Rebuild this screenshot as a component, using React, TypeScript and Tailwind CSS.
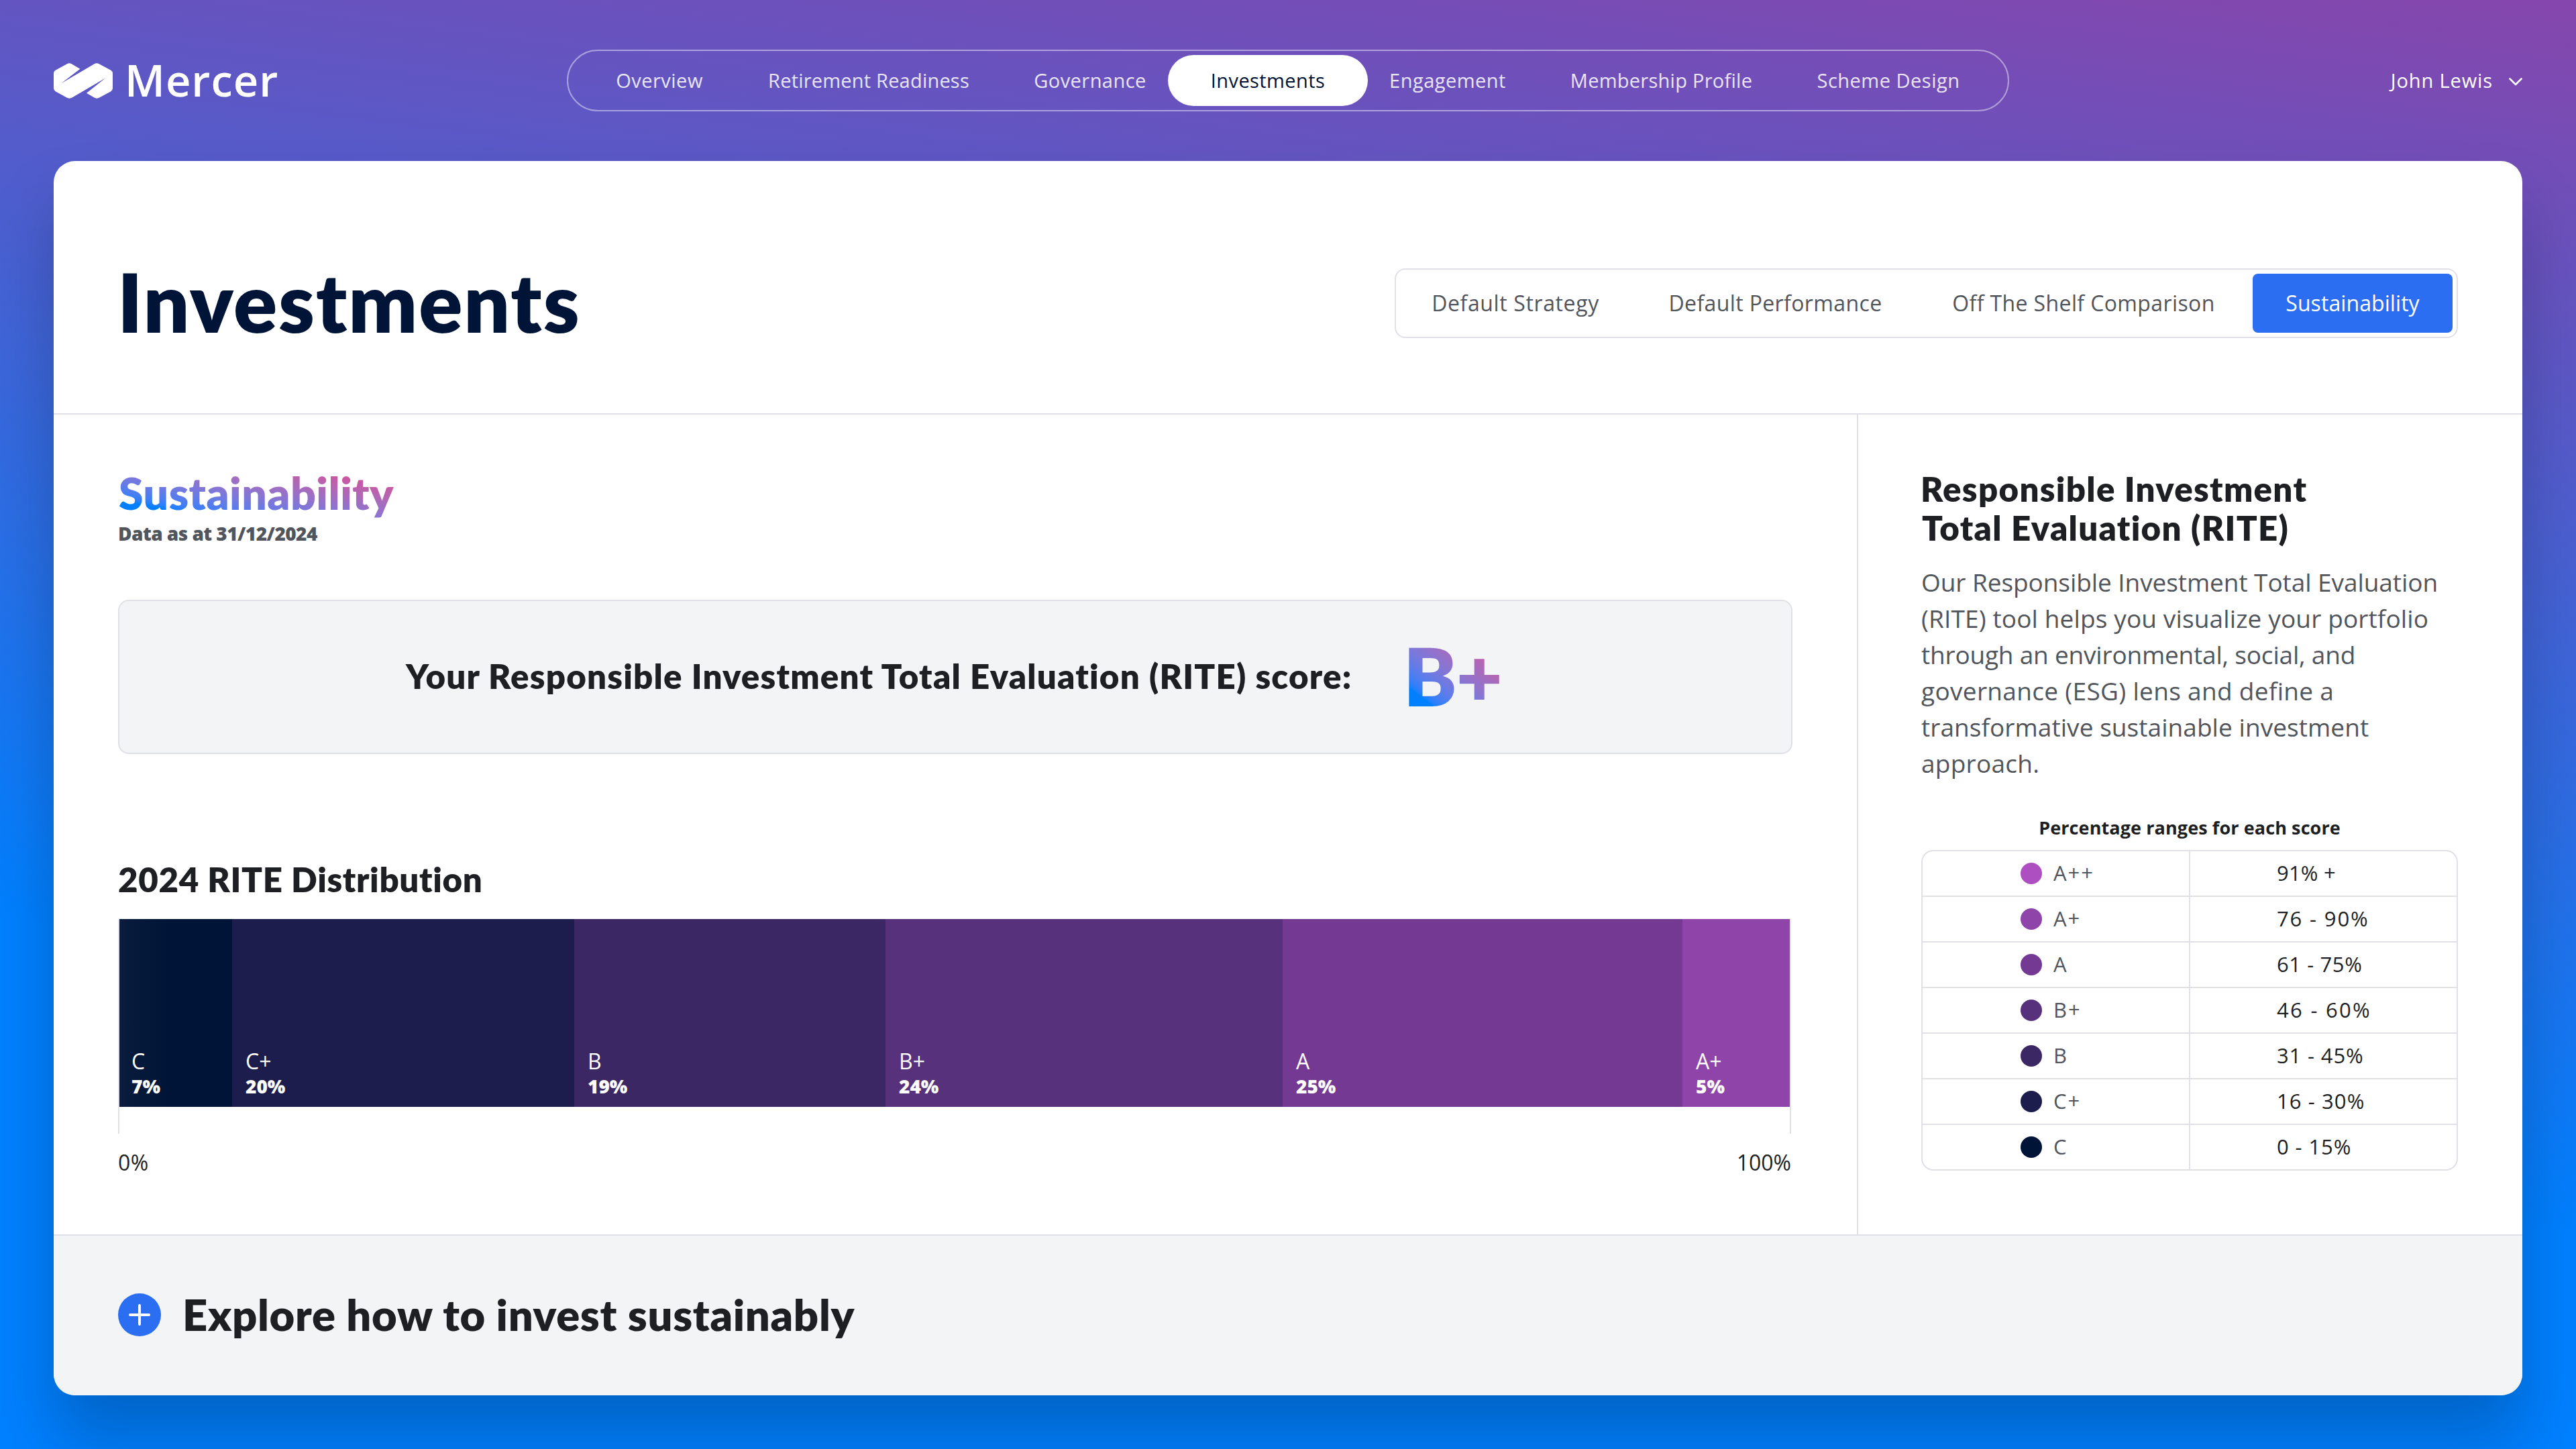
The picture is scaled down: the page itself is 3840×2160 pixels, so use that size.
import React from 'react';

const navItems = [
  { label: 'Overview', tracking: 'tracking-[0.5px]' },
  { label: 'Retirement Readiness', tracking: 'tracking-[0.2px]' },
  { label: 'Governance', tracking: 'tracking-[0.45px]' },
  { label: 'Investments', tracking: 'tracking-[0.4px]', active: true },
  { label: 'Engagement', tracking: 'tracking-[0.48px]' },
  { label: 'Membership Profile', tracking: 'tracking-[0.26px]' },
  { label: 'Scheme Design', tracking: 'tracking-[0.5px]' },
];

const tabs = [
  { label: 'Default Strategy', tracking: 'tracking-[0.62px]' },
  { label: 'Default Performance', tracking: 'tracking-[0.38px]' },
  { label: 'Off The Shelf Comparison', tracking: 'tracking-[0.38px]' },
  { label: 'Sustainability', tracking: 'tracking-[0.08px]', active: true },
];

const segments = [
  { grade: 'C', share: '7%', box: 'w-[168px] pl-[18px] bg-linear-to-r from-[#0b1c3d] to-[#001437] to-45%' },
  { grade: 'C+', share: '20%', box: 'w-[510px] pl-[20px] bg-[#1d1d4d]' },
  { grade: 'B', share: '19%', box: 'w-[464px] pl-[20px] bg-[#3a2764]' },
  { grade: 'B+', share: '24%', box: 'w-[592px] pl-[20px] bg-[#57317c]' },
  { grade: 'A', share: '25%', box: 'w-[596px] pl-[20px] bg-[#733993]' },
  { grade: 'A+', share: '5%', box: 'w-[160px] pl-[20px] bg-[#8f44aa]' },
];

const ranges = [
  { grade: 'A++', range: '91% +', dot: 'bg-[#ad4ec1]', tracking: 'tracking-[0.2px]' },
  { grade: 'A+', range: '76 - 90%', dot: 'bg-[#8f44aa]', tracking: 'tracking-[1.86px]' },
  { grade: 'A', range: '61 - 75%', dot: 'bg-[#733993]', tracking: 'tracking-[0.6px]' },
  { grade: 'B+', range: '46 - 60%', dot: 'bg-[#57317c]', tracking: 'tracking-[2.3px]' },
  { grade: 'B', range: '31 - 45%', dot: 'bg-[#3a2764]', tracking: 'tracking-[0.86px]' },
  { grade: 'C+', range: '16 - 30%', dot: 'bg-[#1d1d4d]', tracking: 'tracking-[1.1px]' },
  { grade: 'C', range: '0 - 15%', dot: 'bg-[#001437]', tracking: 'tracking-[0.9px]' },
];

function Logo() {
  return (
    <div className="flex items-center">
      <svg viewBox="60 101 264 158" className="h-[53px] w-[88px] fill-white">
        <path d="M60 147 Q60 137 68 133 L120 104 Q130 99 140 104 L178 127 L94 191 L242 104 Q253 99 263 104 L316 133 Q324 138 324 147 L324 213 Q324 222 316 227 L263 256 Q253 261 243 256 L207 235 L291 168 L141 256 Q130 261 120 256 L68 227 Q60 222 60 213 Z" />
      </svg>
      <span className="-mt-[3px] ml-[18px] text-[65px] leading-[72px] font-semibold tracking-[1px] text-white">Mercer</span>
    </div>
  );
}

function Header() {
  return (
    <header className="grid h-[240px] grid-cols-[765px_2150px_1fr] items-center px-[80px]">
      <Logo />
      <nav className="grid h-[92px] grid-cols-[228px_396px_264px_266px_270px_367px_310px] items-center rounded-full border-2 border-white/45 pl-[22px]">
        {navItems.map((item) =>
          item.active ? (
            <a key={item.label} className={`-mx-[16px] flex h-[76px] items-center justify-center rounded-full bg-white text-[29px] text-[#001437] ${item.tracking}`}>
              {item.label}
            </a>
          ) : (
            <a key={item.label} className={`text-center text-[29px] whitespace-nowrap text-white/85 ${item.tracking}`}>
              {item.label}
            </a>
          ),
        )}
      </nav>
      <div className="flex items-center justify-end gap-[24px] text-white">
        <span className="text-[29px] tracking-[0.88px]">John Lewis</span>
        <svg viewBox="0 0 20 12" className="mt-[4px] h-[12px] w-[20px] fill-none stroke-white stroke-[2.6]">
          <path d="M1.5 1.5 L10 10 L18.5 1.5" strokeLinecap="round" strokeLinejoin="round" />
        </svg>
      </div>
    </header>
  );
}

function TitleBar() {
  return (
    <div className="flex h-[378px] items-center justify-between border-b-2 border-[#e0e1e6] pt-[48px] pr-[96px] pl-[95px]">
      <h1 className="pb-[4px] font-['Lato','Open_Sans',sans-serif] text-[121px] leading-[140px] font-extrabold tracking-[1.9px] text-[#001437]">Investments</h1>
      <div className="grid h-[104px] grid-cols-[344px_415px_488px_298px] items-center gap-[8px] rounded-[16px] border-2 border-[#e0e1e6] px-[6px]">
        {tabs.map((tab) =>
          tab.active ? (
            <a key={tab.label} className={`flex h-[88px] items-center justify-center rounded-[8px] bg-[#2b6ef2] text-[32px] text-white ${tab.tracking}`}>
              {tab.label}
            </a>
          ) : (
            <a key={tab.label} className={`text-center text-[32px] whitespace-nowrap text-[#51555c] ${tab.tracking}`}>
              {tab.label}
            </a>
          ),
        )}
      </div>
    </div>
  );
}

function Distribution() {
  return (
    <div className="w-[2494px]">
      <div className="h-[320px] border-x-2 border-[#e0e1e6]">
        <div className="flex h-[280px]">
          {segments.map((s) => (
            <div key={s.grade} className={`flex flex-col justify-end pb-[13px] text-white ${s.box}`}>
              <span className="text-[32px] leading-[38px]">{s.grade}</span>
              <span className="text-[28px] leading-[36px] font-extrabold">{s.share}</span>
            </div>
          ))}
        </div>
      </div>
      <div className="mt-[19px] flex justify-between text-[32px] leading-[48px] text-[#1d1f23]">
        <span className="tracking-[0.5px]">0%</span>
        <span>100%</span>
      </div>
    </div>
  );
}

function MainColumn() {
  return (
    <section className="w-[2690px] border-r-2 border-[#e0e1e6] pt-[79px] pl-[96px]">
      <h2 className="w-[412px] bg-linear-to-tr from-[#0080ff] from-18% to-[#cb57a0] to-82% bg-clip-text pl-[1px] font-['Lato','Open_Sans',sans-serif] text-[66px] leading-[76px] font-extrabold tracking-[0.5px] whitespace-nowrap text-transparent">
        Sustainability
      </h2>
      <p className="mt-[3px] text-[28px] leading-[38px] font-extrabold tracking-[-0.55px] text-[#51555c]">Data as at 31/12/2024</p>
      <div className="mt-[80px] flex h-[230px] w-[2496px] items-center rounded-[16px] border-2 border-[#e0e1e6] bg-[#f2f4f6] pl-[427px]">
        <p className="w-[1413px] pb-[3px] font-['Lato','Open_Sans',sans-serif] text-[51px] leading-[60px] font-extrabold tracking-[1.2px] whitespace-nowrap text-[#1d1f23]">
          Your Responsible Investment Total Evaluation (RITE) score:
        </p>
        <strong className="-mt-[5px] ml-[74px] bg-linear-to-tr from-[#0080ff] from-20% to-[#cb57a0] to-85% bg-clip-text pr-[3px] font-['Lato','Open_Sans',sans-serif] text-[119px] leading-[116px] font-extrabold tracking-[-1px] text-transparent">
          B+
        </strong>
      </div>
      <h3 className="mt-[157px] mb-[29px] font-['Lato','Open_Sans',sans-serif] text-[51px] leading-[60px] font-extrabold tracking-[0.65px] text-[#1d1f23]">
        2024 RITE Distribution
      </h3>
      <Distribution />
    </section>
  );
}

function SidePanel() {
  return (
    <aside className="flex-1 pt-[82px] pr-[96px] pl-[94px]">
      <h3 className="font-['Lato','Open_Sans',sans-serif] text-[51px] leading-[58px] font-extrabold tracking-[1.3px] whitespace-nowrap text-[#1d1f23]">
        <span className="-ml-[1px] block">Responsible Investment</span>
        <span className="ml-[1px] block">Total Evaluation (RITE)</span>
      </h3>
      <p className="mt-[25px] text-[37px] leading-[54px] whitespace-nowrap text-[#51555c]">
        <span className="block tracking-[-0.07px]">Our Responsible Investment Total Evaluation</span>
        <span className="block tracking-[0.13px]">(RITE) tool helps you visualize your portfolio</span>
        <span className="block tracking-[-0.2px]">through an environmental, social, and</span>
        <span className="block tracking-[0.32px]">governance (ESG) lens and define a</span>
        <span className="block tracking-[0.06px]">transformative sustainable investment</span>
        <span className="block tracking-[0.25px]">approach.</span>
      </p>
      <p className="mt-[51px] mb-[15px] text-center text-[27px] leading-[36px] font-bold tracking-[0.1px] text-[#1d1f23]">
        Percentage ranges for each score
      </p>
      <div className="divide-y-2 divide-[#e0e1e6] rounded-[18px] border-2 border-[#e0e1e6] text-[31px]">
        {ranges.map((r) => (
          <div key={r.grade} className="grid grid-cols-[399px_1fr]">
            <div className="flex h-[66px] items-center gap-[17px] border-r-2 border-[#e0e1e6] pl-[146px] text-[#51555c]">
              <span className={`size-[32px] rounded-full ${r.dot}`} />
              <span className="pb-[2px] tracking-[2px]">{r.grade}</span>
            </div>
            <span className={`flex items-center pb-[2px] pl-[129px] text-[#1d1f23] ${r.tracking}`}>{r.range}</span>
          </div>
        ))}
      </div>
    </aside>
  );
}

function Footer() {
  return (
    <footer className="flex flex-1 items-center rounded-b-[32px] border-t-2 border-[#e0e1e6] bg-[#f2f4f6] pb-[2px] pl-[96px]">
      <span className="flex size-[64px] items-center justify-center rounded-full bg-[#2b6ef2]">
        <svg viewBox="0 0 32 32" className="size-[32px] fill-none stroke-white stroke-4">
          <path d="M2 16 H30 M16 2 V30" strokeLinecap="round" />
        </svg>
      </span>
      <h2 className="ml-[32px] pb-[2px] font-['Lato','Open_Sans',sans-serif] text-[65px] leading-[80px] font-extrabold tracking-[0.68px] text-[#1d1f23]">
        Explore how to invest sustainably
      </h2>
    </footer>
  );
}

export default function App() {
  return (
    <div className="h-[2160px] w-[3840px] overflow-hidden bg-[linear-gradient(7deg,#0080ff_30%,#8546ac_100%)] font-['Open_Sans','Noto_Sans',sans-serif]">
      <Header />
      <main className="mx-[80px] flex h-[1840px] flex-col rounded-[32px] bg-white shadow-[0_64px_96px_rgba(0,0,0,0.22)]">
        <TitleBar />
        <div className="flex h-[1222px]">
          <MainColumn />
          <SidePanel />
        </div>
        <Footer />
      </main>
    </div>
  );
}
